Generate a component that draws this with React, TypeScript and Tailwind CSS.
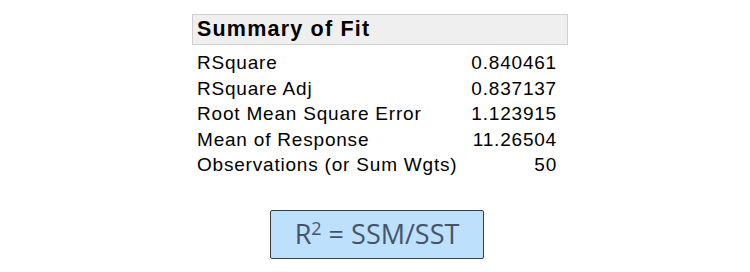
import React from 'react'

const rows: [string, string][] = [
    ['RSquare', '0.840461'],
    ['RSquare Adj', '0.837137'],
    ['Root Mean Square Error', '1.123915'],
    ['Mean of Response', '11.26504'],
    ['Observations (or Sum Wgts)', '50'],
]

const App: React.FC = () => {
    return (
        <div className='w-[750px] h-[272px] bg-white flex flex-col items-start pl-[192px] pt-[14px]' style={{ fontFamily: '"Liberation Sans", Arial, sans-serif' }}>
            <div className='w-[376px] flex flex-col'>
                <div className='h-[31px] bg-[#efefef] border border-[#cfcfcf] flex items-center pl-[4px] text-[21.5px] tracking-[1.2px] font-bold text-black'>
                    Summary of Fit
                </div>
                <div className='flex flex-col pl-[5px] pr-[11px] pt-[5px] text-[19px] tracking-[0.8px] text-black leading-[25.5px]'>
                    {rows.map(([label, value]) => (
                        <div key={label} className='flex justify-between'>
                            <span>{label}</span>
                            <span>{value}</span>
                        </div>
                    ))}
                </div>
            </div>
            <div className='ml-[78px] mt-[32px] w-[214px] h-[49px] bg-[#bde0fc] border border-[#3c3c3c] rounded-[2px] flex items-center justify-center text-[27px] text-[#44546a]' style={{ fontFamily: '"Open Sans", sans-serif' }}>
                <span>R<sup className='text-[18px]'>2</sup> = SSM/SST</span>
            </div>
        </div>
    )
}

export default App
